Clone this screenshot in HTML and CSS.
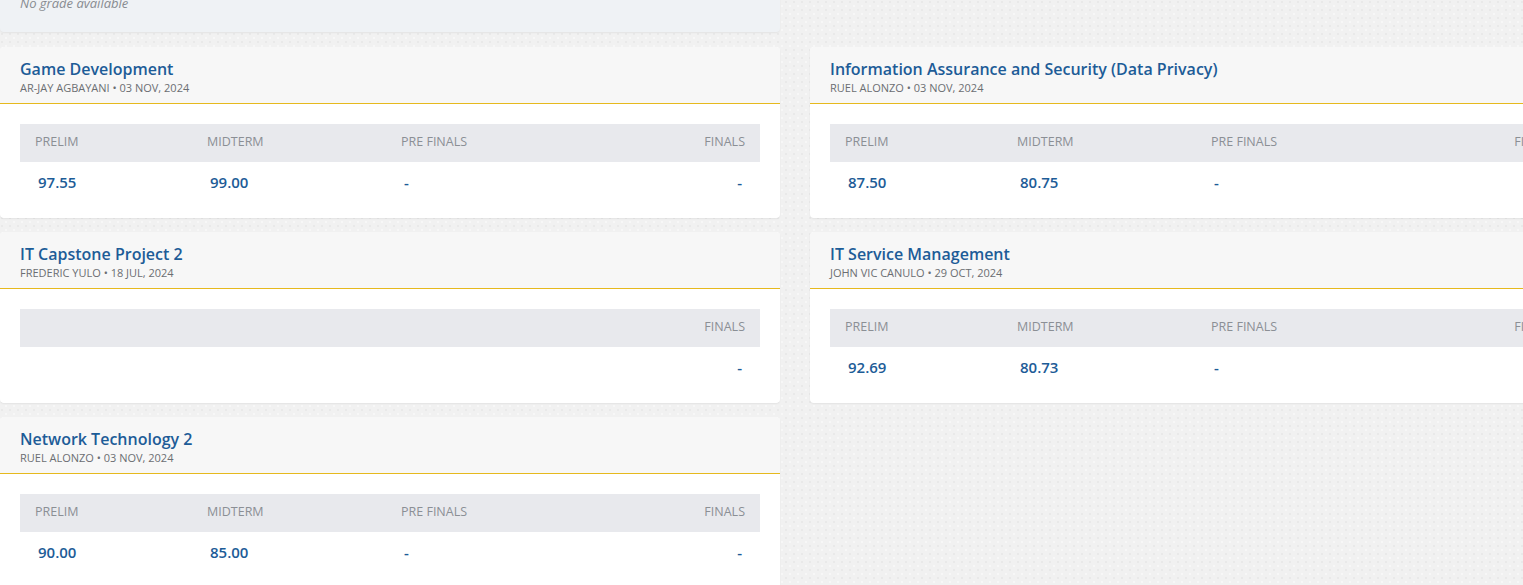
FILE: index.html
```html
<!DOCTYPE html>
<html lang="en">
<head>
<meta charset="utf-8">
<title>Grades</title>
<link rel="stylesheet" href="styles.css">
</head>
<body>
<div class="page">
  <div class="grid">
    <div class="card empty-card">
      <p class="no-grade">No grade available</p>
    </div>
    <div class="placeholder"></div>

    <div class="card">
      <div class="card-head">
        <div class="title">Game Development</div>
        <div class="meta">AR-JAY AGBAYANI • 03 NOV, 2024</div>
      </div>
      <div class="card-body">
        <div class="grades">
          <div class="lbl">PRELIM</div><div class="lbl">MIDTERM</div><div class="lbl">PRE FINALS</div><div class="lbl right">FINALS</div>
          <div class="val">97.55</div><div class="val">99.00</div><div class="val">-</div><div class="val right">-</div>
        </div>
      </div>
    </div>

    <div class="card">
      <div class="card-head">
        <div class="title">Information Assurance and Security (Data Privacy)</div>
        <div class="meta">RUEL ALONZO • 03 NOV, 2024</div>
      </div>
      <div class="card-body">
        <div class="grades">
          <div class="lbl">PRELIM</div><div class="lbl">MIDTERM</div><div class="lbl">PRE FINALS</div><div class="lbl right">FINALS</div>
          <div class="val">87.50</div><div class="val">80.75</div><div class="val">-</div><div class="val right">-</div>
        </div>
      </div>
    </div>

    <div class="card">
      <div class="card-head">
        <div class="title">IT Capstone Project 2</div>
        <div class="meta">FREDERIC YULO • 18 JUL, 2024</div>
      </div>
      <div class="card-body">
        <div class="grades single">
          <div class="lbl right">FINALS</div>
          <div class="val right">-</div>
        </div>
      </div>
    </div>

    <div class="card">
      <div class="card-head">
        <div class="title">IT Service Management</div>
        <div class="meta">JOHN VIC CANULO • 29 OCT, 2024</div>
      </div>
      <div class="card-body">
        <div class="grades">
          <div class="lbl">PRELIM</div><div class="lbl">MIDTERM</div><div class="lbl">PRE FINALS</div><div class="lbl right">FINALS</div>
          <div class="val">92.69</div><div class="val">80.73</div><div class="val">-</div><div class="val right">-</div>
        </div>
      </div>
    </div>

    <div class="card">
      <div class="card-head">
        <div class="title">Network Technology 2</div>
        <div class="meta">RUEL ALONZO • 03 NOV, 2024</div>
      </div>
      <div class="card-body">
        <div class="grades">
          <div class="lbl">PRELIM</div><div class="lbl">MIDTERM</div><div class="lbl">PRE FINALS</div><div class="lbl right">FINALS</div>
          <div class="val">90.00</div><div class="val">85.00</div><div class="val">-</div><div class="val right">-</div>
        </div>
      </div>
    </div>
  </div>
</div>
</body>
</html>
```

FILE: styles.css
```css
html, body {
  margin: 0;
  padding: 0;
  height: 100%;
  overflow: hidden;
}
body {
  font-family: "Open Sans", "Liberation Sans", sans-serif;
  background-color: #f1f1f1;
  background-image:
    radial-gradient(circle at 2px 2px, #e9e9e9 1px, transparent 1.4px),
    radial-gradient(circle at 6px 6px, #f7f7f7 1px, transparent 1.4px);
  background-size: 8px 8px, 8px 8px;
}
.page {
  margin-top: -6px;
}
.grid {
  display: grid;
  grid-template-columns: 780px 780px;
  column-gap: 30px;
  row-gap: 14px;
  align-items: start;
}
.card {
  background: #fff;
  border-radius: 4px;
  box-shadow: 0 1px 2px rgba(0, 0, 0, 0.06);
  overflow: hidden;
}
.empty-card {
  background: #eff2f5;
  border-radius: 0 0 4px 4px;
  padding: 0 20px 20px;
  margin-bottom: 1px;
}
.no-grade {
  margin: 0;
  font-size: 13px;
  line-height: 18px;
  font-style: italic;
  color: #888c91;
}
.card-head {
  background: #f7f7f7;
  padding: 12px 20px 8px;
  border-bottom: 1px solid #e6b91e;
}
.title {
  font-size: 16px;
  line-height: 20px;
  font-weight: 600;
  color: #1d5c97;
  white-space: nowrap;
}
.meta {
  font-size: 11px;
  line-height: 16px;
  padding-top: 1px;
  margin-bottom: -1px;
  color: #6b6e72;
  white-space: nowrap;
}
.card-body {
  padding: 20px 20px 16px;
}
.grades {
  display: grid;
  grid-template-columns: 172px 194px 1fr auto;
}
.grades.single {
  grid-template-columns: 1fr;
}
.lbl {
  background: #e8e9ed;
  height: 38px;
  line-height: 36px;
  padding: 0 15px;
  font-size: 12.5px;
  color: #8b8f95;
}
.val {
  height: 40px;
  line-height: 40px;
  padding: 0 18px;
  font-size: 15px;
  font-weight: 600;
  color: #1d5c97;
}
.right {
  text-align: right;
}
```
